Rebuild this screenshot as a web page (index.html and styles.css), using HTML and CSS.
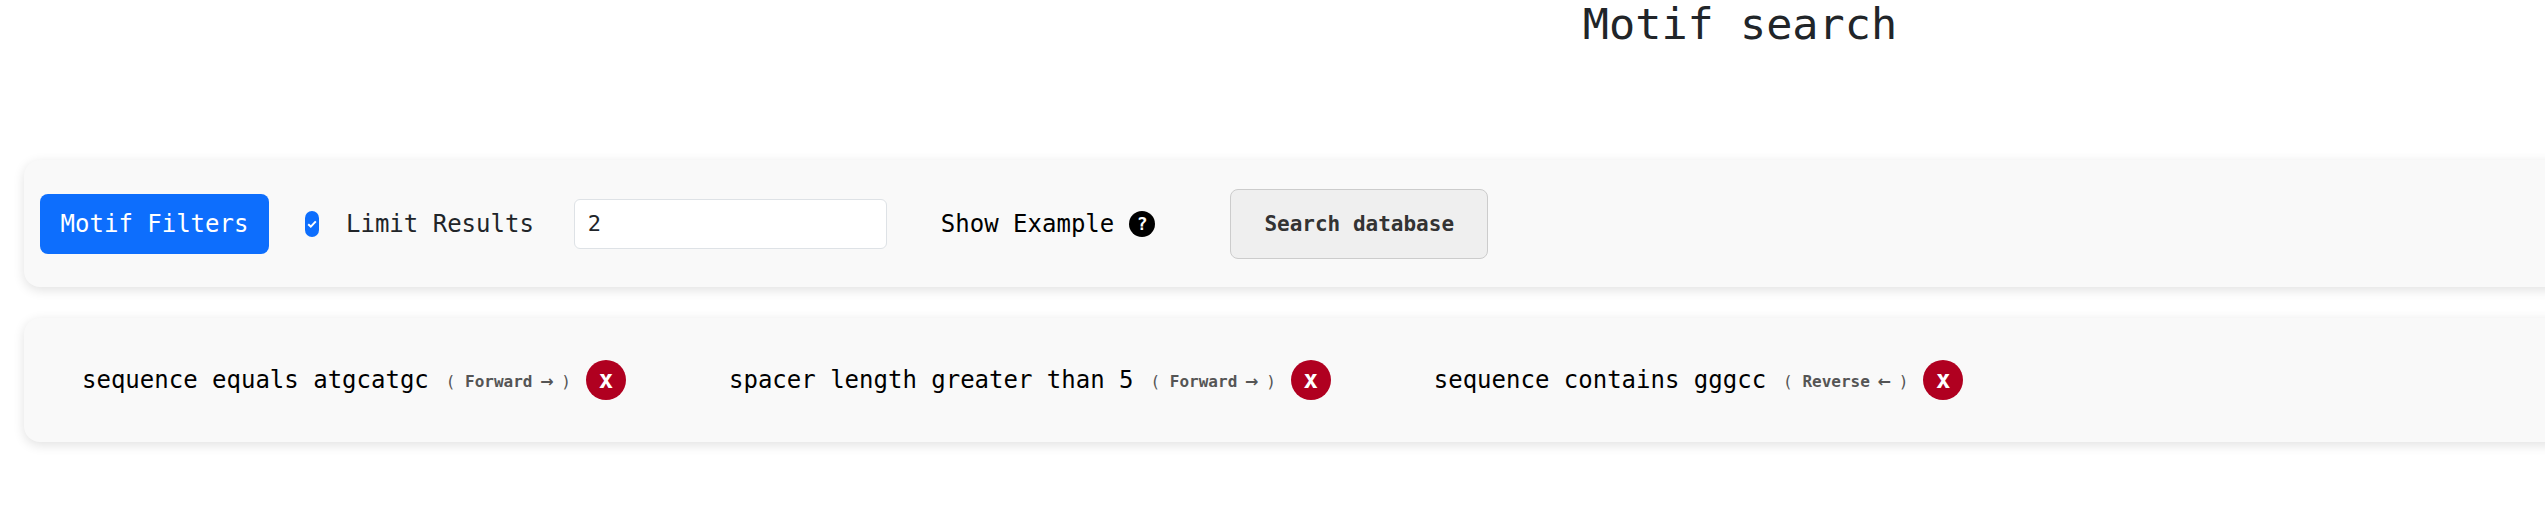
FILE: index.html
```html
<!DOCTYPE html>
<html lang="en">
<head>
<meta charset="utf-8">
<title>Motif search</title>
<link rel="stylesheet" href="styles.css">
</head>
<body>
<h1 class="title">Motif search</h1>
<section class="panel toolbar">
  <button class="btn-primary" type="button">Motif Filters</button>
  <label class="limit"><span class="check"><svg class="tick" viewBox="0 0 10 8" width="10" height="8"><path d="M1.2 4.2 3.8 6.6 8.8 1.4" fill="none" stroke="#fff" stroke-width="2"/></svg></span><span>Limit Results</span></label>
  <input class="num" type="text" value="2">
  <span class="example">Show Example <span class="help">?</span></span>
  <button class="btn-search" type="button">Search database</button>
</section>
<section class="panel filters">
  <div class="filter"><span>sequence equals atgcatgc</span><small>( <b>Forward</b> <i class="arrow">→</i> )</small><button class="x" type="button">x</button></div>
  <div class="filter"><span>spacer length greater than 5</span><small>( <b>Forward</b> <i class="arrow">→</i> )</small><button class="x" type="button">x</button></div>
  <div class="filter"><span>sequence contains gggcc</span><small>( <b>Reverse</b> <i class="arrow">←</i> )</small><button class="x" type="button">x</button></div>
</section>
</body>
</html>
```
FILE: styles.css
```css
* { box-sizing: border-box; }
html, body { margin: 0; background: #fff; }
body { width: 2545px; height: 512px; overflow: hidden; font-family: "DejaVu Sans Mono", monospace; color: #212529; }
.title { margin: 0; height: 160px; text-align: center; font-size: 43.5px; font-weight: 400; line-height: 48px; padding-left: 935px; }
.panel { width: 2570px; margin-left: 24px; background: #f9f9f9; border-radius: 16px; box-shadow: 0 3px 12px rgba(0,0,0,.12); display: flex; align-items: center; }
.toolbar { height: 127px; padding-left: 16px; }
.btn-primary { width: 229px; height: 60px; border: 0; border-radius: 8px; background: #0d6efd; color: #fff; font: 24px "DejaVu Sans Mono", monospace; }
.limit { display: flex; align-items: center; margin-left: 36px; font-size: 24px; }
.check { width: 14px; height: 26px; margin-right: 27px; border-radius: 7px; background: #0d6efd; display: flex; align-items: center; justify-content: center; }
.tick { flex: none; }
.num { width: 313px; height: 50px; margin-left: 40px; padding: 0 13px; border: 1px solid #dee2e6; border-radius: 6px; background: #fff; font: 22px "DejaVu Sans Mono", monospace; color: #212529; }
.example { display: flex; align-items: center; gap: 15px; margin-left: 54px; font-size: 24px; color: #000; }
.help { width: 26px; height: 26px; border-radius: 50%; background: #000; color: #fff; font-size: 18px; font-weight: 700; display: flex; align-items: center; justify-content: center; }
.btn-search { width: 258px; height: 70px; margin-left: 75px; border: 1px solid #ccc; border-radius: 8px; background: #efefef; color: #333; font: 700 21px "DejaVu Sans Mono", monospace; }
.filters { height: 124px; margin-top: 31px; padding-left: 58px; gap: 103px; }
.filter { display: flex; align-items: center; font-size: 24px; color: #000; }
.filter small { font-size: 16px; margin: 3px 15px 0 17px; color: #555; }
.arrow { font-family: "DejaVu Sans", sans-serif; font-style: normal; font-weight: 700; display: inline-block; width: 9.6px; text-indent: -2px; white-space: nowrap; }
.x { width: 40px; height: 40px; border: 0; border-radius: 50%; background: #b00020; color: #fff; font: 700 24px "DejaVu Sans Mono", monospace; padding: 0; }
```
